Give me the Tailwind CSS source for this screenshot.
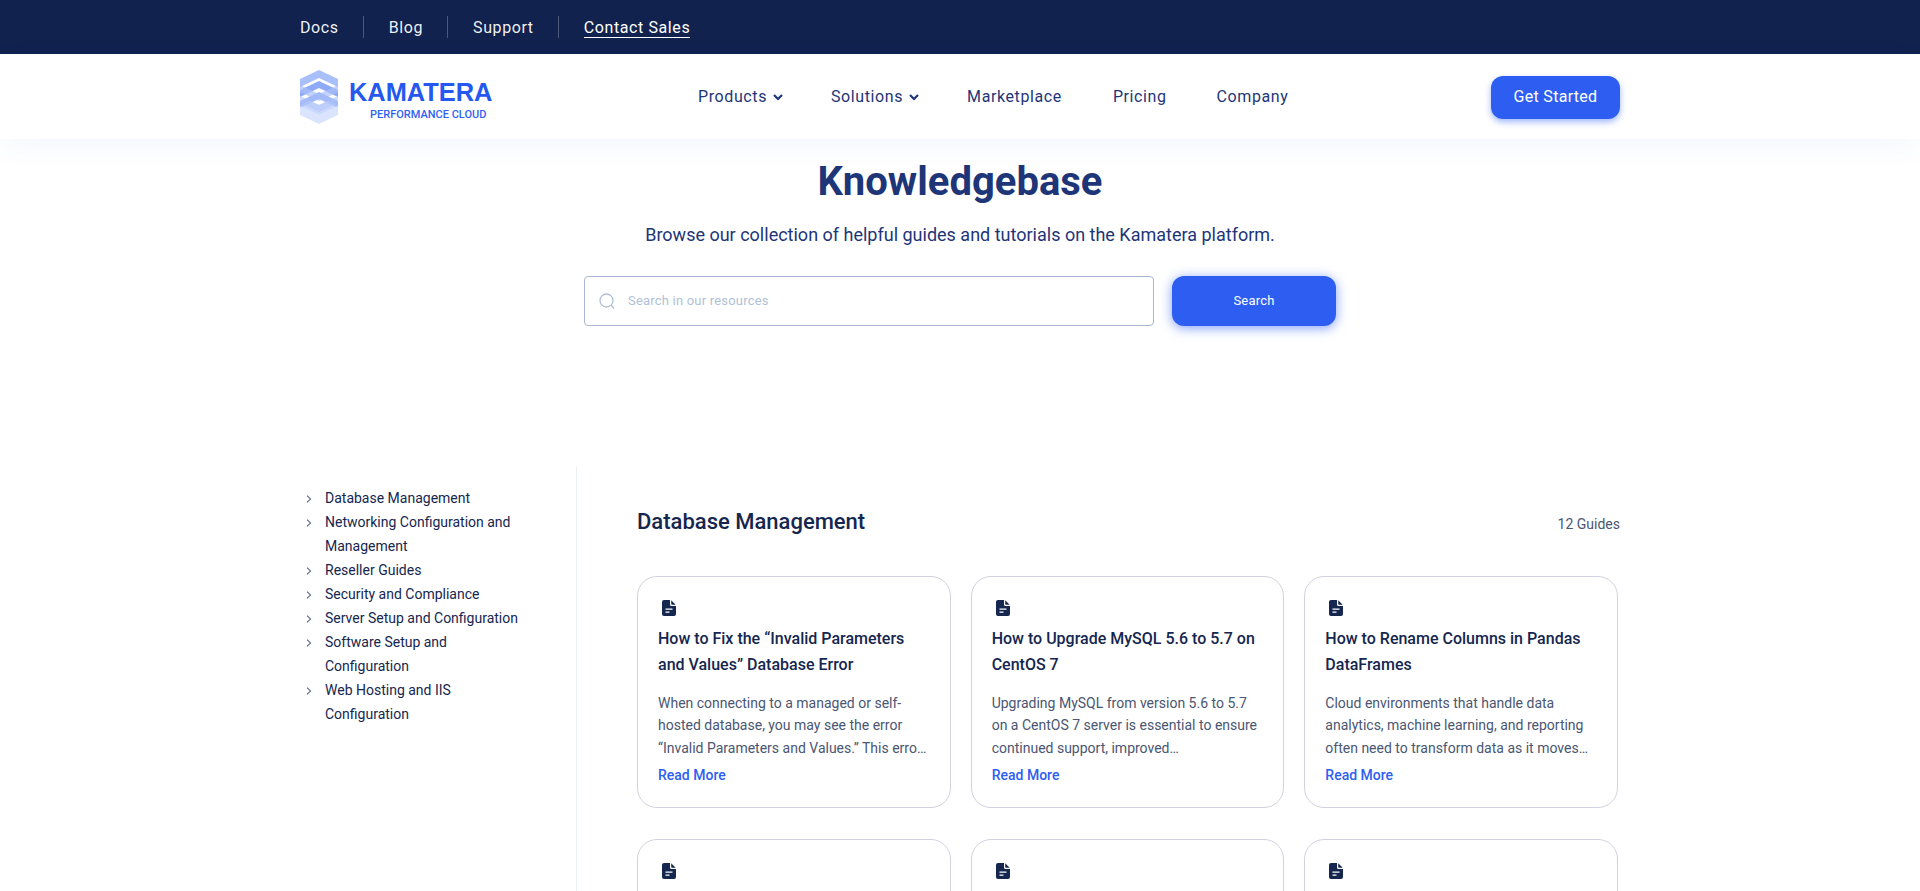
<!DOCTYPE html>
<html lang="en">
<head>
  <meta charset="UTF-8">
  <meta name="viewport" content="width=device-width, initial-scale=1.0">
  <title>Knowledgebase - Kamatera</title>
  <script src="https://cdn.jsdelivr.net/npm/@tailwindcss/browser@4"></script>
</head>
<body class="h-[891px] overflow-hidden bg-white font-['Roboto',sans-serif]">

  <!-- Top bar -->
  <div class="h-[54px] bg-[#11224f]">
    <div class="mx-auto flex h-full w-[1320px] items-center text-base tracking-[0.6px] text-white/95">
      <a class="mt-[2px] pr-[24px]">Docs</a>
      <span class="h-[22px] w-px bg-white/25"></span>
      <a class="mt-[2px] pr-[24px] pl-[25px]">Blog</a>
      <span class="h-[22px] w-px bg-white/25"></span>
      <a class="mt-[2px] pr-[24px] pl-[25px]">Support</a>
      <span class="h-[22px] w-px bg-white/25"></span>
      <a class="mt-[2px] ml-[25px] border-b border-white leading-[19px] text-white">Contact Sales</a>
    </div>
  </div>

  <!-- Header -->
  <header class="relative z-10 h-[85px] bg-white shadow-[0_8px_30px_rgba(44,92,240,0.05)]">
    <div class="mx-auto flex h-full w-[1320px] items-center">
      <div class="flex w-[398px] items-center">
        <svg class="h-[54px] w-[38px] shrink-0" viewBox="0 0 38 54">
          <polygon points="19,0 38,9 38,17 19,8 0,17 0,9" fill="#a9bffa"/>
          <polygon points="19,11 38,20 38,27 19,18 0,27 0,20" fill="#8fabf8"/>
          <polygon points="0,15 19,24 38,15 38,22 19,31 0,22" fill="#a9bffa" opacity="0.7"/>
          <polygon points="19,22 38,31 38,38 19,29 0,38 0,31" fill="#a3baf9"/>
          <polygon points="0,26 19,35 38,26 38,33 19,42 0,33" fill="#a9bffa" opacity="0.6"/>
          <polygon points="0,36 19,45 38,36 38,45 19,54 0,45" fill="#dbe4fd"/>
          <polygon points="0,36 10,31 19,35 28,31 38,36 19,45" fill="#b7c9fb" opacity="0.7"/>
        </svg>
        <div class="mt-[4px] ml-[11px] flex flex-col">
          <span class="font-['Liberation_Sans',sans-serif] text-[25.400px] leading-[30px] font-bold text-[#2458f0]">KAMATERA</span>
          <span class="mt-[2px] ml-[21px] text-[11px] leading-[12px] font-medium text-[#2f62f2]">PERFORMANCE CLOUD</span>
        </div>
      </div>
      <nav class="flex items-center text-base tracking-[0.6px] text-[#1e3577]">
        <a class="flex items-center gap-[5px]">Products
          <svg class="h-3 w-3" viewBox="0 0 12 12" fill="none" stroke="currentColor" stroke-width="2.200"><path d="M2 4l4 4 4-4"/></svg>
        </a>
        <a class="ml-[47px] flex items-center gap-[5px]">Solutions
          <svg class="h-3 w-3" viewBox="0 0 12 12" fill="none" stroke="currentColor" stroke-width="2.200"><path d="M2 4l4 4 4-4"/></svg>
        </a>
        <a class="ml-[47px]">Marketplace</a>
        <a class="ml-[51px]">Pricing</a>
        <a class="ml-[50px]">Company</a>
      </nav>
      <a class="mt-[1px] ml-auto flex h-[43px] w-[129px] items-center justify-center rounded-xl bg-[#2d5ef1] text-base tracking-[0.3px] text-white shadow-[0_3px_6px_rgba(45,94,241,0.45)]">Get Started</a>
    </div>
  </header>

  <!-- Hero -->
  <section class="flex flex-col items-center pt-[14px]">
    <h1 class="text-[40px] leading-[57px] font-bold text-[#1e3577]">Knowledgebase</h1>
    <p class="mt-[11px] text-lg leading-[28px] text-[#1e3577]">Browse our collection of helpful guides and tutorials on the Kamatera platform.</p>
    <div class="mt-[27px] flex w-[752px] justify-between">
      <div class="flex h-[50px] w-[570px] items-center rounded border border-[#a9b8d0] px-[14px]">
        <svg class="h-4 w-4 text-[#b1bfd6]" viewBox="0 0 16 16" fill="none" stroke="currentColor" stroke-width="1.300"><circle cx="7.500" cy="7.500" r="6.500"/><path d="M12 12l3 3.500"/></svg>
        <span class="ml-[13px] text-[13px] tracking-[0.2px] text-[#b1bfd6]">Search in our resources</span>
      </div>
      <button class="h-[50px] w-[164px] rounded-xl bg-[#2d5ef1] text-[13px] tracking-[0.2px] text-white shadow-[0_2px_12px_rgba(45,94,241,0.6)]">Search</button>
    </div>
  </section>

  <!-- Content -->
  <main class="mx-auto mt-[141px] flex w-[1320px]">
    <aside class="w-[277px] shrink-0 border-r border-[#eceef6] pt-[19px] pr-[48px] text-sm leading-6 text-[#15264f]">
      <ul>
        <li class="flex"><svg class="mt-[9px] ml-[6px] h-2 w-[6px] shrink-0 text-[#15264f]" viewBox="0 0 6 8" fill="none" stroke="currentColor" stroke-width="1"><path d="M1 .7L4.600 4 1 7.300"/></svg><span class="ml-[13px]">Database Management</span></li>
        <li class="flex"><svg class="mt-[9px] ml-[6px] h-2 w-[6px] shrink-0 text-[#15264f]" viewBox="0 0 6 8" fill="none" stroke="currentColor" stroke-width="1"><path d="M1 .7L4.600 4 1 7.300"/></svg><span class="ml-[13px]">Networking Configuration and Management</span></li>
        <li class="flex"><svg class="mt-[9px] ml-[6px] h-2 w-[6px] shrink-0 text-[#15264f]" viewBox="0 0 6 8" fill="none" stroke="currentColor" stroke-width="1"><path d="M1 .7L4.600 4 1 7.300"/></svg><span class="ml-[13px]">Reseller Guides</span></li>
        <li class="flex"><svg class="mt-[9px] ml-[6px] h-2 w-[6px] shrink-0 text-[#15264f]" viewBox="0 0 6 8" fill="none" stroke="currentColor" stroke-width="1"><path d="M1 .7L4.600 4 1 7.300"/></svg><span class="ml-[13px]">Security and Compliance</span></li>
        <li class="flex"><svg class="mt-[9px] ml-[6px] h-2 w-[6px] shrink-0 text-[#15264f]" viewBox="0 0 6 8" fill="none" stroke="currentColor" stroke-width="1"><path d="M1 .7L4.600 4 1 7.300"/></svg><span class="ml-[13px]">Server Setup and Configuration</span></li>
        <li class="flex"><svg class="mt-[9px] ml-[6px] h-2 w-[6px] shrink-0 text-[#15264f]" viewBox="0 0 6 8" fill="none" stroke="currentColor" stroke-width="1"><path d="M1 .7L4.600 4 1 7.300"/></svg><span class="ml-[13px]">Software Setup and Configuration</span></li>
        <li class="flex"><svg class="mt-[9px] ml-[6px] h-2 w-[6px] shrink-0 text-[#15264f]" viewBox="0 0 6 8" fill="none" stroke="currentColor" stroke-width="1"><path d="M1 .7L4.600 4 1 7.300"/></svg><span class="ml-[13px]">Web Hosting and IIS Configuration</span></li>
      </ul>
    </aside>

    <div class="ml-[60px] flex-1 pt-[36px]">
      <div class="flex items-center justify-between">
        <h2 class="text-[22px] leading-[38px] font-medium text-[#15264f]">Database Management</h2>
        <span class="mt-[4px] text-sm text-[#4a5672]">12 Guides</span>
      </div>

      <div class="mt-[35px] grid w-[981px] grid-cols-3 gap-x-[20px] gap-y-[31px]">
        <article class="h-[232px] rounded-[20px] border border-[#d0d2e0] px-[20px] pt-[23px]">
          <svg class="ml-1 h-4 w-[14px] text-[#15264f]" viewBox="0 0 14 16"><path fill="currentColor" fill-rule="evenodd" d="M2 0h6v4.500A1.500 1.500 0 0 0 9.500 6H14v8a2 2 0 0 1-2 2H2a2 2 0 0 1-2-2V2a2 2 0 0 1 2-2zM9.200 0.300L13.700 4.800H10a.8.8 0 0 1-.8-.8zM3.500 8.500v1.200h7V8.500zM3.500 11.500v1.200h4v-1.200z"/></svg>
          <h3 class="mt-[10px] text-base leading-[26px] font-medium text-[#15264f]">How to Fix the “Invalid Parameters and Values” Database Error</h3>
          <p class="mt-[14px] line-clamp-3 text-sm leading-[22.4px] text-[#4a5672]">When connecting to a managed or self-hosted database, you may see the error “Invalid Parameters and Values.” This error appears when a client sends an unexpected request.</p>
          <a class="mt-[5px] block text-sm leading-[22px] font-medium text-[#2d5ef1]">Read More</a>
        </article>
        <article class="h-[232px] rounded-[20px] border border-[#d0d2e0] px-[20px] pt-[23px]">
          <svg class="ml-1 h-4 w-[14px] text-[#15264f]" viewBox="0 0 14 16"><path fill="currentColor" fill-rule="evenodd" d="M2 0h6v4.500A1.500 1.500 0 0 0 9.500 6H14v8a2 2 0 0 1-2 2H2a2 2 0 0 1-2-2V2a2 2 0 0 1 2-2zM9.200 0.300L13.700 4.800H10a.8.8 0 0 1-.8-.8zM3.500 8.500v1.200h7V8.500zM3.500 11.500v1.200h4v-1.200z"/></svg>
          <h3 class="mt-[10px] text-base leading-[26px] font-medium text-[#15264f]">How to Upgrade MySQL 5.6 to 5.7 on CentOS 7</h3>
          <p class="mt-[14px] line-clamp-3 text-sm leading-[22.4px] text-[#4a5672]">Upgrading MySQL from version 5.6 to 5.7 on a CentOS 7 server is essential to ensure continued support, improved interoperability and stronger security for your applications.</p>
          <a class="mt-[5px] block text-sm leading-[22px] font-medium text-[#2d5ef1]">Read More</a>
        </article>
        <article class="h-[232px] rounded-[20px] border border-[#d0d2e0] px-[20px] pt-[23px]">
          <svg class="ml-1 h-4 w-[14px] text-[#15264f]" viewBox="0 0 14 16"><path fill="currentColor" fill-rule="evenodd" d="M2 0h6v4.500A1.500 1.500 0 0 0 9.500 6H14v8a2 2 0 0 1-2 2H2a2 2 0 0 1-2-2V2a2 2 0 0 1 2-2zM9.200 0.300L13.700 4.800H10a.8.8 0 0 1-.8-.8zM3.500 8.500v1.200h7V8.500zM3.500 11.500v1.200h4v-1.200z"/></svg>
          <h3 class="mt-[10px] text-base leading-[26px] font-medium text-[#15264f]">How to Rename Columns in Pandas DataFrames</h3>
          <p class="mt-[14px] line-clamp-3 text-sm leading-[22.4px] text-[#4a5672]">Cloud environments that handle data analytics, machine learning, and reporting often need to transform data as it moves between systems and storage layers.</p>
          <a class="mt-[5px] block text-sm leading-[22px] font-medium text-[#2d5ef1]">Read More</a>
        </article>
        <article class="h-[232px] rounded-[20px] border border-[#d0d2e0] px-[20px] pt-[23px]">
          <svg class="ml-1 h-4 w-[14px] text-[#15264f]" viewBox="0 0 14 16"><path fill="currentColor" fill-rule="evenodd" d="M2 0h6v4.500A1.500 1.500 0 0 0 9.500 6H14v8a2 2 0 0 1-2 2H2a2 2 0 0 1-2-2V2a2 2 0 0 1 2-2zM9.200 0.300L13.700 4.800H10a.8.8 0 0 1-.8-.8zM3.500 8.500v1.200h7V8.500zM3.500 11.500v1.200h4v-1.200z"/></svg>
        </article>
        <article class="h-[232px] rounded-[20px] border border-[#d0d2e0] px-[20px] pt-[23px]">
          <svg class="ml-1 h-4 w-[14px] text-[#15264f]" viewBox="0 0 14 16"><path fill="currentColor" fill-rule="evenodd" d="M2 0h6v4.500A1.500 1.500 0 0 0 9.500 6H14v8a2 2 0 0 1-2 2H2a2 2 0 0 1-2-2V2a2 2 0 0 1 2-2zM9.200 0.300L13.700 4.800H10a.8.8 0 0 1-.8-.8zM3.500 8.500v1.200h7V8.500zM3.500 11.500v1.200h4v-1.200z"/></svg>
        </article>
        <article class="h-[232px] rounded-[20px] border border-[#d0d2e0] px-[20px] pt-[23px]">
          <svg class="ml-1 h-4 w-[14px] text-[#15264f]" viewBox="0 0 14 16"><path fill="currentColor" fill-rule="evenodd" d="M2 0h6v4.500A1.500 1.500 0 0 0 9.500 6H14v8a2 2 0 0 1-2 2H2a2 2 0 0 1-2-2V2a2 2 0 0 1 2-2zM9.200 0.300L13.700 4.800H10a.8.8 0 0 1-.8-.8zM3.500 8.500v1.200h7V8.500zM3.500 11.500v1.200h4v-1.200z"/></svg>
        </article>
      </div>
    </div>
  </main>
</body>
</html>
